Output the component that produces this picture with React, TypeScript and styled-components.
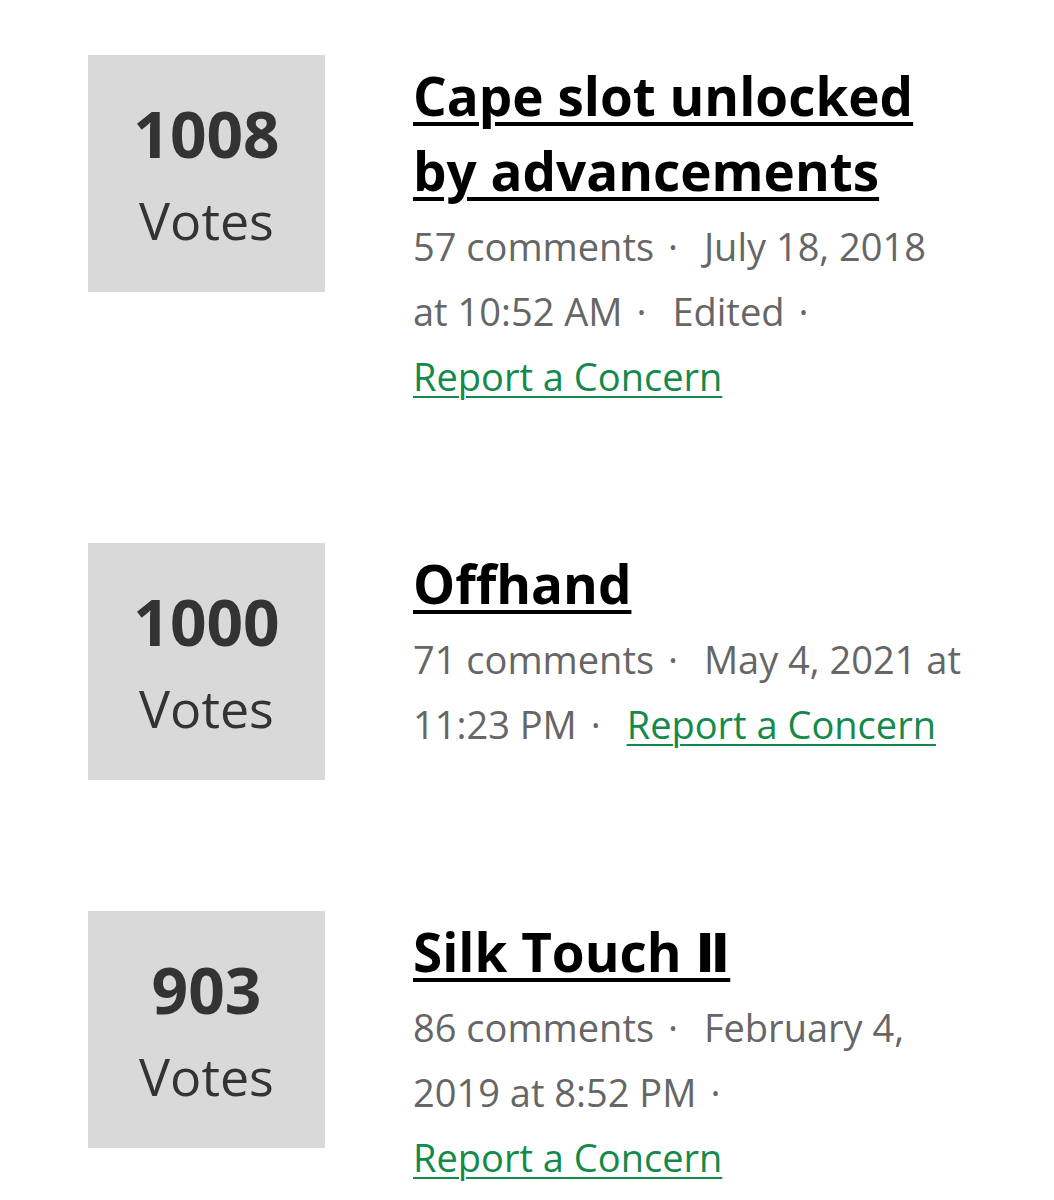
import React from "react";
import styled, { createGlobalStyle } from "styled-components";

const GlobalStyle = createGlobalStyle`
  html, body {
    margin: 0;
    padding: 0;
    background: #ffffff;
  }
  body {
    font-family: "Open Sans", "Noto Sans", "DejaVu Sans", sans-serif;
  }
`;

const Page = styled.div`
  display: flex;
  flex-direction: column;
  gap: 131px;
  padding: 55px 86px 40px 88px;
  width: 1054px;
  box-sizing: border-box;
`;

const Item = styled.div`
  display: flex;
  align-items: flex-start;
  gap: 88px;
`;

const VoteBox = styled.div`
  flex: 0 0 237px;
  height: 237px;
  background: #d9d9d9;
  display: flex;
  flex-direction: column;
  align-items: center;
  justify-content: center;
  color: #333333;
  padding-top: 6px;
  box-sizing: border-box;
`;

const VoteCount = styled.div`
  font-size: 64px;
  font-weight: 700;
  line-height: 86px;
`;

const VoteLabel = styled.div`
  font-size: 52px;
  font-weight: 400;
  line-height: 86px;
`;

const Body = styled.div`
  flex: 1;
  min-width: 0;
  padding: 3px 0 3px;
`;

const Title = styled.a`
  display: block;
  font-size: 53px;
  font-weight: 700;
  line-height: 75px;
  color: #000000;
  text-decoration: underline;
  text-decoration-thickness: 4px;
  text-underline-offset: 6px;
  margin-bottom: 6px;
`;

const Meta = styled.div`
  font-size: 38px;
  line-height: 65px;
  color: #666666;
`;

const Sep = styled.span`
  margin: 0 16px 0 14px;
`;

const Report = styled.a`
  white-space: nowrap;
  color: #138a4a;
  text-decoration: underline;
  text-decoration-thickness: 2px;
  text-underline-offset: 5px;
`;

type Post = {
  votes: number;
  title: string;
  parts: string[];
};

const posts: Post[] = [
  {
    votes: 1008,
    title: "Cape slot unlocked by advancements",
    parts: ["57 comments", "July 18, 2018 at 10:52 AM", "Edited"],
  },
  {
    votes: 1000,
    title: "Offhand",
    parts: ["71 comments", "May 4, 2021 at 11:23 PM"],
  },
  {
    votes: 903,
    title: "Silk Touch Ⅱ",
    parts: ["86 comments", "February 4, 2019 at 8:52 PM"],
  },
];

export default function App() {
  return (
    <>
      <GlobalStyle />
      <Page>
        {posts.map((p) => (
          <Item key={p.title}>
            <VoteBox>
              <VoteCount>{p.votes}</VoteCount>
              <VoteLabel>Votes</VoteLabel>
            </VoteBox>
            <Body>
              <Title href="#">{p.title}</Title>
              <Meta>
                {p.parts.map((part) => (
                  <React.Fragment key={part}>
                    {part}
                    <Sep>·</Sep>{" "}
                  </React.Fragment>
                ))}
                <Report href="#">Report a Concern</Report>
              </Meta>
            </Body>
          </Item>
        ))}
      </Page>
    </>
  );
}
